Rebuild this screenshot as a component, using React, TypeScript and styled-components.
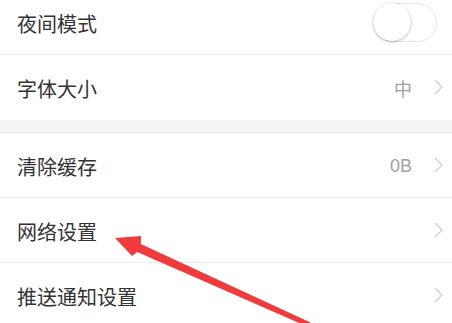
import styled, { createGlobalStyle } from 'styled-components';

const GlobalStyle = createGlobalStyle`
  html, body {
    margin: 0;
    padding: 0;
    background: #ffffff;
  }
  body {
    font-family: 'Noto Sans CJK SC', 'Noto Sans', sans-serif;
    overflow: hidden;
  }
`;

const Page = styled.div`
  position: relative;
  width: 452px;
  height: 323px;
  overflow: hidden;
  background: #ffffff;
`;

const List = styled.div`
  margin-top: -10px;
  display: flex;
  flex-direction: column;
`;

const Group = styled.section`
  display: flex;
  flex-direction: column;
  background: #ffffff;
`;

const GroupGap = styled.div`
  height: 12px;
  background: #f5f5f5;
  border-bottom: 1px solid #e6e6e6;
`;

const Row = styled.div<{ $last?: boolean }>`
  height: 64px;
  display: flex;
  align-items: center;
  padding: 0 9px 0 17px;
  border-bottom: 1px solid ${(p) => (p.$last ? 'transparent' : '#ebebeb')};
`;

const Label = styled.span`
  flex: 1;
  font-size: 20px;
  color: #333333;
  padding-top: 2px;
`;

const Value = styled.span`
  font-size: 18px;
  color: #a0a0a0;
  font-family: 'Liberation Sans', 'Noto Sans CJK SC', sans-serif;
  margin-right: 22px;
  padding-top: 2px;
`;

const Chevron = styled.svg`
  width: 9px;
  height: 16px;
  flex: none;
`;

const Toggle = styled.div`
  position: relative;
  width: 62px;
  height: 37px;
  margin-right: 6px;
  border: 1.5px solid #e4e4e4;
  border-radius: 20px;
  background: #ffffff;
  box-sizing: content-box;
`;

const Knob = styled.div`
  position: absolute;
  left: -1px;
  top: -1px;
  width: 38px;
  height: 38px;
  border-radius: 50%;
  background: #ffffff;
  box-shadow: 0 1px 3px rgba(0, 0, 0, 0.25), 0 0 0 0.5px rgba(0, 0, 0, 0.06);
`;

const ArrowOverlay = styled.svg`
  position: absolute;
  left: 0;
  top: 0;
  width: 452px;
  height: 323px;
  pointer-events: none;
`;

const ChevronIcon = () => (
  <Chevron viewBox="0 0 9 16">
    <path d="M1 1 L8 8 L1 15" fill="none" stroke="#cacace" strokeWidth="1.2" />
  </Chevron>
);

type Item = { label: string; value?: string; toggle?: boolean };

const groups: Item[][] = [
  [
    { label: '夜间模式', toggle: true },
    { label: '字体大小', value: '中' },
  ],
  [
    { label: '清除缓存', value: '0B' },
    { label: '网络设置' },
    { label: '推送通知设置' },
  ],
];

export default function App() {
  return (
    <>
      <GlobalStyle />
      <Page>
        <List>
          {groups.map((items, gi) => (
            <div key={gi}>
              <Group>
                {items.map((item, i) => (
                  <Row key={item.label} $last={gi === 0 && i === items.length - 1}>
                    <Label>{item.label}</Label>
                    {item.toggle ? (
                      <Toggle>
                        <Knob />
                      </Toggle>
                    ) : (
                      <>
                        {item.value && <Value>{item.value}</Value>}
                        <ChevronIcon />
                      </>
                    )}
                  </Row>
                ))}
              </Group>
              {gi === 0 && <GroupGap />}
            </div>
          ))}
        </List>
        <ArrowOverlay viewBox="0 0 452 323">
          <polygon
            points="115,238 141,236 140.8,243.9 311,322.7 309,327.3 137.2,252.1 132,256"
            fill="#ef3b3b"
          />
        </ArrowOverlay>
      </Page>
    </>
  );
}
